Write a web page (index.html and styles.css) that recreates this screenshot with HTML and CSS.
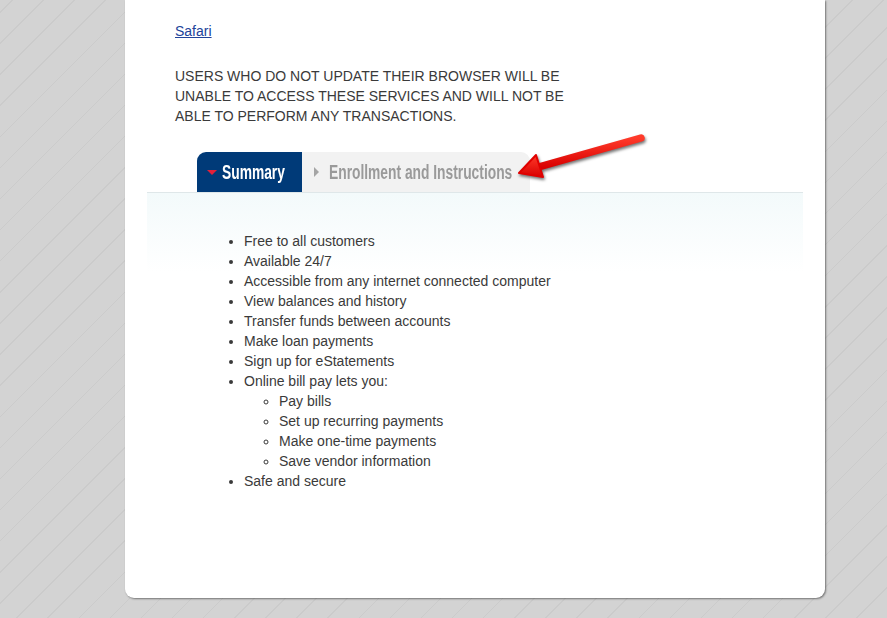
FILE: index.html
```html
<!DOCTYPE html>
<html>
<head>
<meta charset="utf-8">
<link rel="stylesheet" href="styles.css">
</head>
<body>
<div class="card">
  <div class="intro">
    <a class="link" href="#">Safari</a>
    <p class="warning">USERS WHO DO NOT UPDATE THEIR BROWSER WILL BE UNABLE TO ACCESS THESE SERVICES AND WILL NOT BE ABLE TO PERFORM ANY TRANSACTIONS.</p>
  </div>
  <div class="tabs">
    <div class="tab tab-active"><span class="tri-down"></span><span class="tab-label">Summary</span></div>
    <div class="tab tab-inactive"><span class="tri-right"></span><span class="tab-label">Enrollment and Instructions</span></div>
  </div>
  <div class="panel">
    <ul class="features">
      <li>Free to all customers</li>
      <li>Available 24/7</li>
      <li>Accessible from any internet connected computer</li>
      <li>View balances and history</li>
      <li>Transfer funds between accounts</li>
      <li>Make loan payments</li>
      <li>Sign up for eStatements</li>
      <li>Online bill pay lets you:
        <ul class="sub">
          <li>Pay bills</li>
          <li>Set up recurring payments</li>
          <li>Make one-time payments</li>
          <li>Save vendor information</li>
        </ul>
      </li>
      <li>Safe and secure</li>
    </ul>
  </div>
  <svg class="arrow" width="150" height="64" viewBox="0 0 150 64">
    <defs>
      <linearGradient id="ag" x1="0" y1="0" x2="0" y2="1">
        <stop offset="0" stop-color="#ff3a2a"/>
        <stop offset="1" stop-color="#d80000"/>
      </linearGradient>
    </defs>
    <g class="arrow-g">
      <line x1="136" y1="13" x2="30" y2="43" stroke="url(#ag)" stroke-width="7.5" stroke-linecap="round"/>
      <polygon points="14,48 31,30 38,52" fill="url(#ag)" stroke="#e00000" stroke-width="2" stroke-linejoin="round"/>
    </g>
  </svg>
</div>
</body>
</html>
```
FILE: styles.css
```css
html, body {
  margin: 0;
  padding: 0;
}
body {
  background-color: #d3d3d3;
  background-image: repeating-linear-gradient(-45deg, #d3d3d3 0px, #d3d3d3 21px, #cbcbcb 21px, #cbcbcb 22px);
  font-family: "Liberation Sans", Arial, sans-serif;
  font-size: 14px;
  line-height: 20px;
  color: #3a3a3a;
  height: 618px;
  overflow: hidden;
}
.card {
  position: relative;
  margin-left: 125px;
  width: 700px;
  height: 598px;
  background: #fff;
  border-radius: 0 0 9px 9px;
  box-shadow: 1px 1px 2px rgba(0,0,0,0.45);
  box-sizing: border-box;
  padding: 21px 22px 0 22px;
}
.intro {
  padding-left: 28px;
}
.link {
  color: #21439a;
  text-decoration: underline;
}
.warning {
  margin: 25px 0 0 0;
  width: 395px;
}
.tabs {
  display: flex;
  margin: 26px 0 0 50px;
  height: 40px;
}
.tab {
  display: flex;
  align-items: center;
  font-family: "Liberation Sans", Arial, sans-serif;
  font-weight: bold;
  font-size: 20px;
  white-space: nowrap;
  overflow: hidden;
}
.tab-label {
  display: inline-block;
  transform: scaleX(0.69);
  transform-origin: left center;
}
.tab-active {
  background: #003a78;
  color: #fff;
  border-radius: 9px 0 0 0;
  width: 105px;
  flex: none;
  box-sizing: border-box;
  padding-left: 10px;
}
.tab-inactive {
  background: #f2f2f2;
  color: #9a9a9a;
  border-radius: 0 9px 0 0;
  width: 228px;
  flex: none;
  box-sizing: border-box;
  padding-left: 12px;
}
.tri-down {
  flex: none;
  width: 0;
  height: 0;
  border-left: 5px solid transparent;
  border-right: 5px solid transparent;
  border-top: 5px solid #e2203a;
  margin-right: 5px;
}
.tri-right {
  flex: none;
  width: 0;
  height: 0;
  border-top: 5px solid transparent;
  border-bottom: 5px solid transparent;
  border-left: 5px solid #a5a5a5;
  margin-right: 10px;
}
.panel {
  border-top: 1px solid #dfe7e9;
  background: linear-gradient(#f3fafb 0px, #ffffff 80px);
  padding-top: 38px;
}
.features {
  margin: 0 0 0 57px;
  padding-left: 40px;
  list-style: disc;
}
.sub {
  margin: 0;
  padding-left: 35px;
  list-style: circle;
}
.arrow {
  position: absolute;
  left: 380px;
  top: 125px;
  overflow: visible;
}
.arrow-g {
  filter: drop-shadow(1px 2px 1.5px rgba(0,0,0,0.55));
}
```
